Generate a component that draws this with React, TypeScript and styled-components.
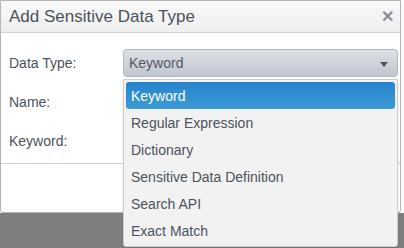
import React, { useState } from 'react';
import styled, { createGlobalStyle } from 'styled-components';

const GlobalStyle = createGlobalStyle`
  html, body {
    margin: 0;
    padding: 0;
    background: #7f7f7f;
    font-family: 'Liberation Sans', Arial, sans-serif;
  }
`;

const Page = styled.div`
  width: 404px;
  height: 248px;
  display: grid;
  grid-template-rows: 213px 1fr;
`;

const Backdrop = styled.div`
  background: #fafafa;
  position: relative;
  z-index: 2;
`;

const Shade = styled.div`
  background: #7f7f7f;
`;

const Dialog = styled.div`
  width: 401px;
  height: 213px;
  box-sizing: border-box;
  border: 1px solid #b5b5b5;
  border-radius: 0 0 3px 3px;
  background: #fff;
  display: flex;
  flex-direction: column;
`;

const Header = styled.div`
  height: 32px;
  box-sizing: border-box;
  display: flex;
  align-items: center;
  justify-content: space-between;
  padding: 0 6px 0 8px;
  background: linear-gradient(#f8f8f8, #efefef);
  border-bottom: 1px solid #cfcfcf;
`;

const Title = styled.div`
  font-size: 17px;
  color: #4c525d;
`;

const Close = styled.div`
  font-size: 16px;
  font-weight: bold;
  color: #8a8d93;
`;

const Body = styled.div`
  height: 131px;
  box-sizing: border-box;
  padding: 16px 0 0 8px;
  border-bottom: 1px solid #cfcfcf;
  display: grid;
  grid-template-columns: 114px 275px;
  grid-auto-rows: 28px;
  row-gap: 11px;
  align-items: center;
`;

const Label = styled.div`
  font-size: 14px;
  color: #4c525d;
`;

const Field = styled.div`
  position: relative;
  height: 28px;
`;

const Select = styled.div`
  height: 28px;
  box-sizing: border-box;
  border: 1px solid #b3b7bf;
  border-radius: 4px;
  background: linear-gradient(#dde0e6, #c2c6ce);
  display: flex;
  align-items: center;
  justify-content: space-between;
  padding: 0 9px 0 5px;
  font-size: 14px;
  color: #555a63;
`;

const Caret = styled.span`
  width: 0;
  height: 0;
  border-left: 4px solid transparent;
  border-right: 4px solid transparent;
  border-top: 5px solid #4f535b;
  margin-top: 2px;
`;

const Input = styled.div`
  height: 28px;
  box-sizing: border-box;
  border: 1px solid #c4c4c4;
  border-radius: 3px;
  background: #fff;
`;

const Menu = styled.div`
  position: absolute;
  top: 30px;
  left: 0;
  width: 275px;
  box-sizing: border-box;
  padding: 2px;
  background: #f2f2f2;
  border: 1px solid #cdcdcd;
  border-radius: 0 0 3px 3px;
  box-shadow: 0 1px 2px rgba(0, 0, 0, 0.15);
  z-index: 5;
`;

const Item = styled.div<{ $active?: boolean }>`
  height: 27px;
  display: flex;
  align-items: center;
  padding-left: 5px;
  font-size: 14px;
  border-radius: 3px;
  color: ${({ $active }) => ($active ? '#fff' : '#4c525d')};
  background: ${({ $active }) => ($active ? 'linear-gradient(#2584ca, #3d9bd7)' : 'transparent')};
`;

const Footer = styled.div`
  flex: 1;
`;

const options = [
  'Keyword',
  'Regular Expression',
  'Dictionary',
  'Sensitive Data Definition',
  'Search API',
  'Exact Match',
];

export default function App() {
  const [selected] = useState('Keyword');

  return (
    <>
      <GlobalStyle />
      <Page>
        <Backdrop>
          <Dialog>
            <Header>
              <Title>Add Sensitive Data Type</Title>
              <Close>✕</Close>
            </Header>
            <Body>
              <Label>Data Type:</Label>
              <Field>
                <Select>
                  {selected}
                  <Caret />
                </Select>
                <Menu>
                  {options.map((o) => (
                    <Item key={o} $active={o === selected}>
                      {o}
                    </Item>
                  ))}
                </Menu>
              </Field>
              <Label>Name:</Label>
              <Input />
              <Label>Keyword:</Label>
              <Input />
            </Body>
            <Footer />
          </Dialog>
        </Backdrop>
        <Shade />
      </Page>
    </>
  );
}
